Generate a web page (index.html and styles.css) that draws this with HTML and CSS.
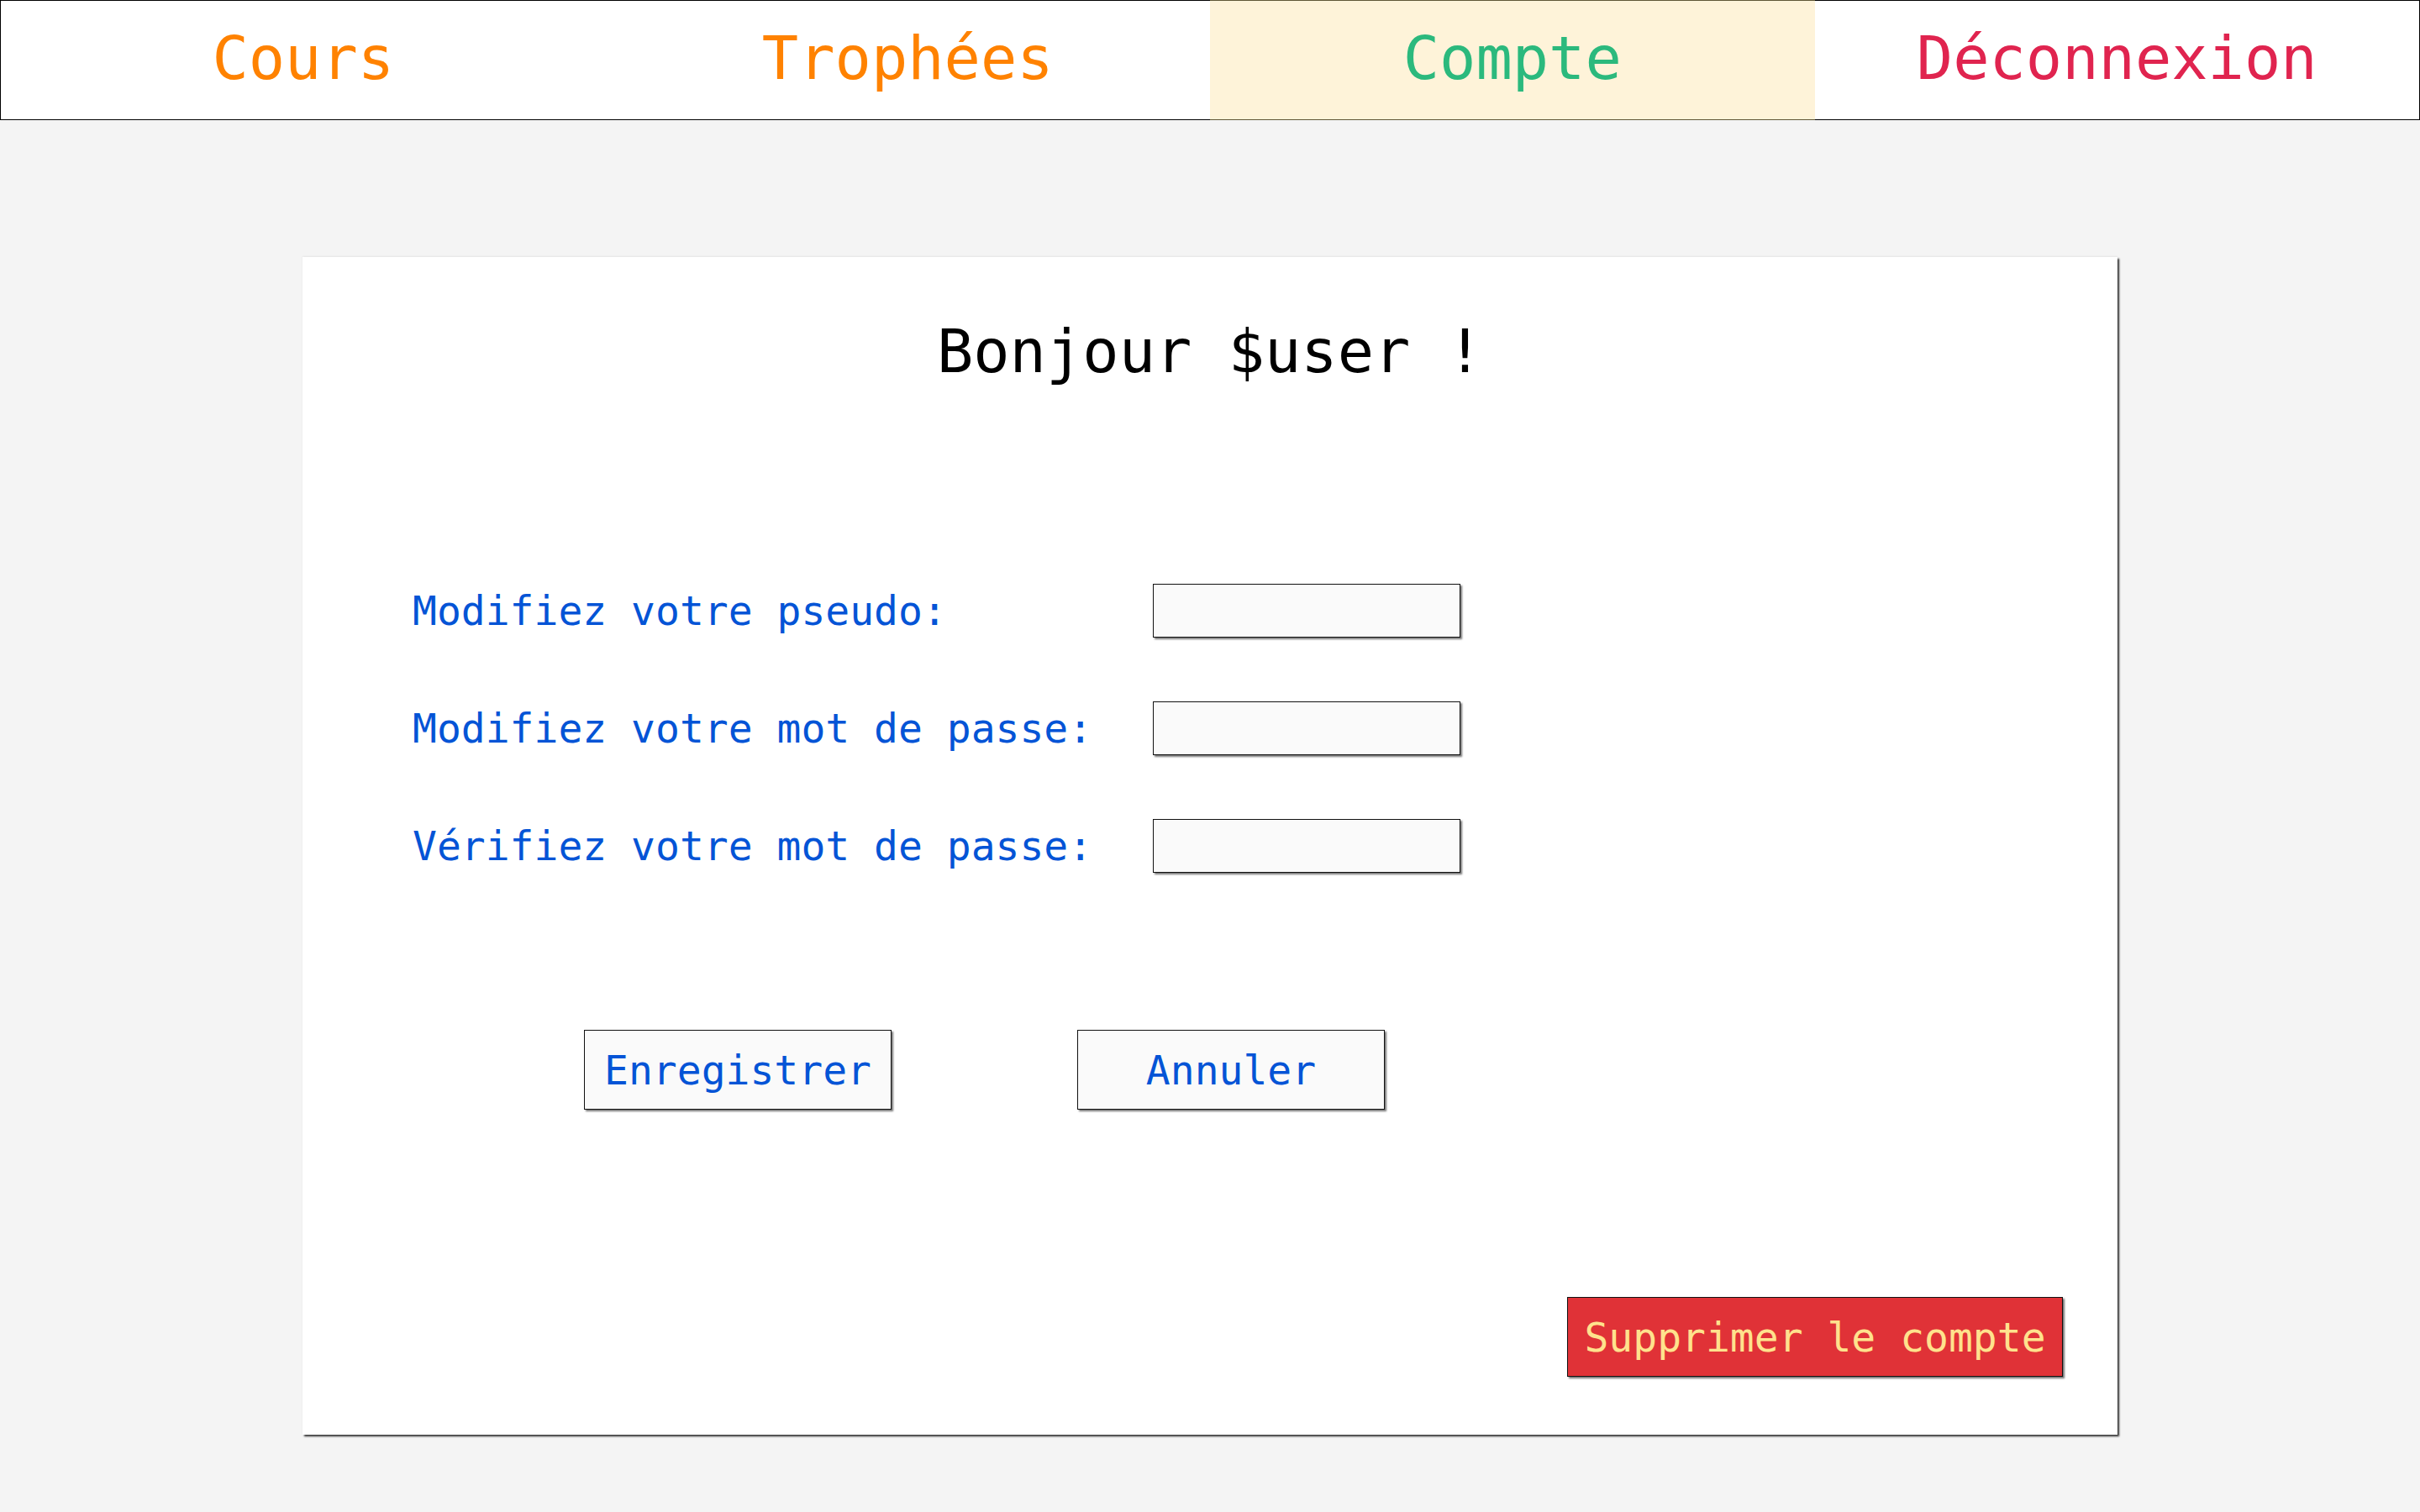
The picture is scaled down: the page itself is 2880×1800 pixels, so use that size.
FILE: index.html
```html
<!DOCTYPE html>
<html lang="fr">
<head>
<meta charset="utf-8">
<title>Compte</title>
<link rel="stylesheet" href="styles.css">
</head>
<body>
<nav class="nav">
  <a class="nav-item nav-orange" href="#">Cours</a>
  <a class="nav-item nav-orange" href="#">Trophées</a>
  <a class="nav-item nav-green nav-active" href="#">Compte</a>
  <a class="nav-item nav-red" href="#">Déconnexion</a>
</nav>
<main class="card">
  <h1 class="title">Bonjour $user !</h1>
  <form class="form">
    <label class="label" for="pseudo">Modifiez votre pseudo:</label>
    <input class="field" id="pseudo" type="text">
    <label class="label" for="pass">Modifiez votre mot de passe:</label>
    <input class="field" id="pass" type="password">
    <label class="label" for="pass2">Vérifiez votre mot de passe:</label>
    <input class="field" id="pass2" type="password">
  </form>
  <div class="actions">
    <button class="btn" type="button">Enregistrer</button>
    <button class="btn" type="button">Annuler</button>
  </div>
  <div class="danger-row">
    <button class="btn-danger" type="button">Supprimer le compte</button>
  </div>
</main>
</body>
</html>
```
FILE: styles.css
```css
* { box-sizing: border-box; }

html, body {
  margin: 0;
  padding: 0;
}

body {
  background: #f4f4f4;
  font-family: "DejaVu Sans Mono", "Liberation Mono", monospace;
  height: 1800px;
  overflow: hidden;
}

.nav {
  display: grid;
  grid-template-columns: repeat(4, 1fr);
  height: 143px;
  border: 1px solid #000;
  background: #fff;
}

.nav-item {
  display: flex;
  align-items: center;
  justify-content: center;
  font-size: 72px;
  padding-bottom: 6px;
  text-decoration: none;
}

.nav-orange { color: #ff8200; }
.nav-green { color: #2bb97d; }
.nav-red { color: #e0244f; }

.nav-active {
  background: #fef3d9;
  margin: -1px 0;
  border-top: 1px solid #5f5636;
  border-bottom: 1px solid #5f5636;
}

.card {
  width: 2160px;
  height: 1402px;
  margin: 163px auto 0;
  background: #fff;
  box-shadow: 2px 2px 2px rgba(0, 0, 0, 0.8), 0 -1px 2px rgba(0, 0, 0, 0.06);
  padding: 69px 0 0;
  display: flex;
  flex-direction: column;
}

.title {
  margin: 0;
  text-align: center;
  font-weight: normal;
  font-size: 72px;
  line-height: 86px;
  color: #000;
}

.form {
  display: grid;
  grid-template-columns: 881px 366px;
  row-gap: 76px;
  align-items: center;
  margin-top: 234px;
  padding-left: 131px;
}

.label {
  font-size: 48px;
  color: #0454d6;
}

.field {
  width: 366px;
  height: 64px;
  border: 1px solid #111;
  background: #fafafa;
  box-shadow: 2px 2px 2px rgba(0, 0, 0, 0.55);
  padding: 0;
  margin: 0;
}

.actions {
  display: flex;
  gap: 221px;
  margin-top: 187px;
  padding-left: 335px;
}

.btn {
  width: 366px;
  height: 95px;
  border: 1px solid #111;
  background: #fafafa;
  box-shadow: 2px 2px 2px rgba(0, 0, 0, 0.55);
  font-family: "DejaVu Sans Mono", "Liberation Mono", monospace;
  font-size: 48px;
  color: #0454d6;
  padding: 0;
  margin: 0;
}

.danger-row {
  display: flex;
  justify-content: flex-end;
  margin-top: 223px;
  padding-right: 65px;
}

.btn-danger {
  width: 590px;
  height: 95px;
  border: 1px solid #111;
  background: #e03237;
  box-shadow: 2px 2px 2px rgba(0, 0, 0, 0.55);
  font-family: "DejaVu Sans Mono", "Liberation Mono", monospace;
  font-size: 48px;
  color: #ffe28d;
  padding: 0;
  margin: 0;
}
```
